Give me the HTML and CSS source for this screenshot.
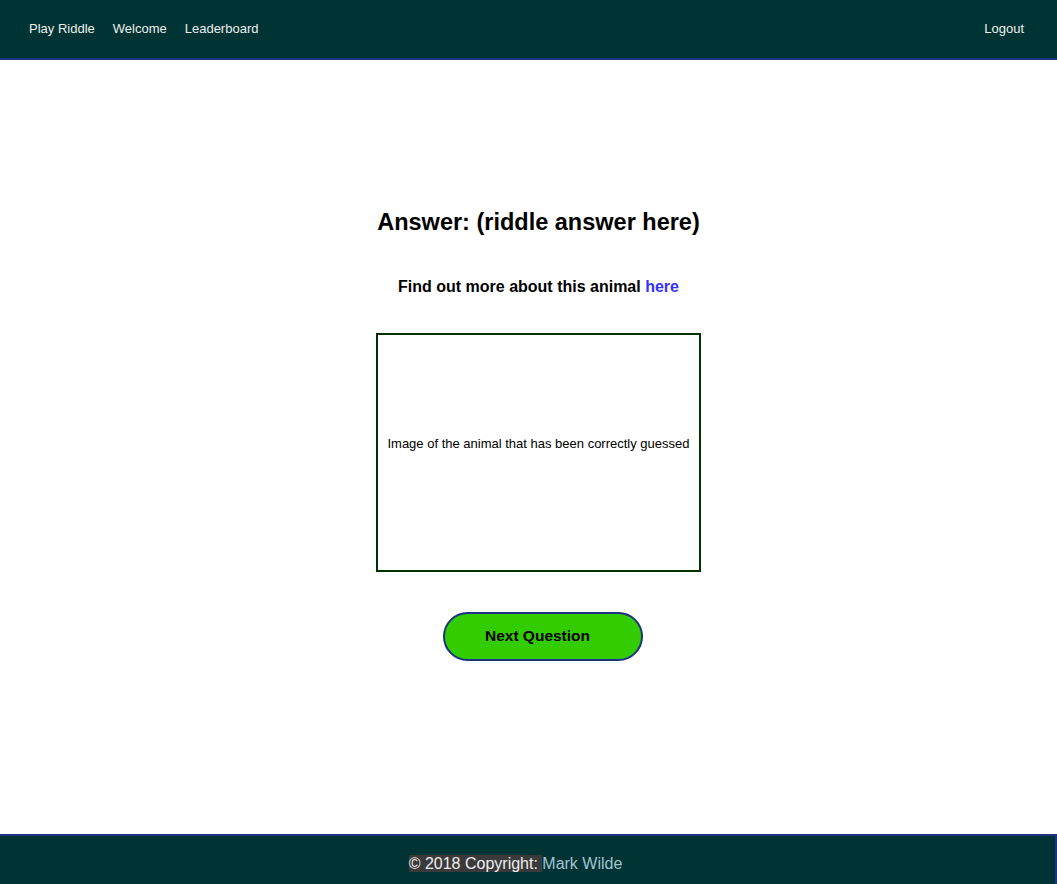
FILE: index.html
```html
<!DOCTYPE html>
<html>
<head>
<meta charset="utf-8">
<link rel="stylesheet" href="styles.css">
</head>
<body>
<nav class="navbar">
  <div class="nav-left">
    <a class="nav-link" href="#">Play Riddle</a>
    <a class="nav-link" href="#">Welcome</a>
    <a class="nav-link" href="#">Leaderboard</a>
  </div>
  <a class="nav-link" href="#">Logout</a>
</nav>
<main class="content">
  <h1 class="answer">Answer: (riddle answer here)</h1>
  <p class="more">Find out more about this animal <a class="more-link" href="#">here</a></p>
  <div class="image-box">Image of the animal that has been correctly guessed</div>
  <button class="next-btn">Next Question</button>
</main>
<footer class="footer">
  <p class="footer-text"><span class="copy">© 2018 Copyright: </span><a class="author" href="#">Mark Wilde</a></p>
</footer>
</body>
</html>
```
FILE: styles.css
```css
html, body {
  margin: 0;
  padding: 0;
}
body {
  font-family: "Liberation Sans", Arial, sans-serif;
  background: #ffffff;
  color: #000;
}
.navbar {
  height: 58px;
  background: #003333;
  border-bottom: 2px solid #1c3385;
  display: flex;
  align-items: center;
  justify-content: space-between;
  padding: 0 33px 0 29px;
}
.nav-left {
  display: flex;
  gap: 18px;
}
.nav-link {
  color: #eeeeee;
  text-decoration: none;
  font-size: 13px;
  position: relative;
  top: -1px;
}
.content {
  display: flex;
  flex-direction: column;
  align-items: center;
  padding: 148px 0 0 20px;
  height: 774px;
  box-sizing: border-box;
}
.answer {
  margin: 0;
  font-size: 23.5px;
  font-weight: bold;
  line-height: 28px;
}
.more {
  margin: 41px 0 0;
  font-size: 16px;
  font-weight: bold;
  line-height: 20px;
}
.more-link {
  color: #3333ff;
  text-decoration: none;
}
.image-box {
  margin-top: 36px;
  width: 321px;
  height: 217px;
  padding-bottom: 18px;
  box-sizing: content-box;
  border: 2px solid #003300;
  display: flex;
  align-items: center;
  justify-content: center;
  font-size: 13px;
  text-align: center;
}
.next-btn {
  margin: 40px 0 0 8px;
  width: 200px;
  height: 49px;
  background: #33cc00;
  border: 2px solid #1c3385;
  border-radius: 25px;
  font-family: "Liberation Sans", Arial, sans-serif;
  font-size: 15.5px;
  font-weight: bold;
  color: #000;
  padding: 0 10px 2px 0;
  cursor: pointer;
}
.footer {
  height: 48px;
  background: #003333;
  border-top: 2px solid #1c3385;
  border-right: 2px solid #1c3385;
  padding-right: 24px;
}
.footer-text {
  margin: 0;
  text-align: center;
  font-size: 16px;
  line-height: 56px;
}
.copy {
  background: #3a3a3a;
  color: #eeeeee;
}
.author {
  color: #a3c3cf;
  text-decoration: none;
}
```
